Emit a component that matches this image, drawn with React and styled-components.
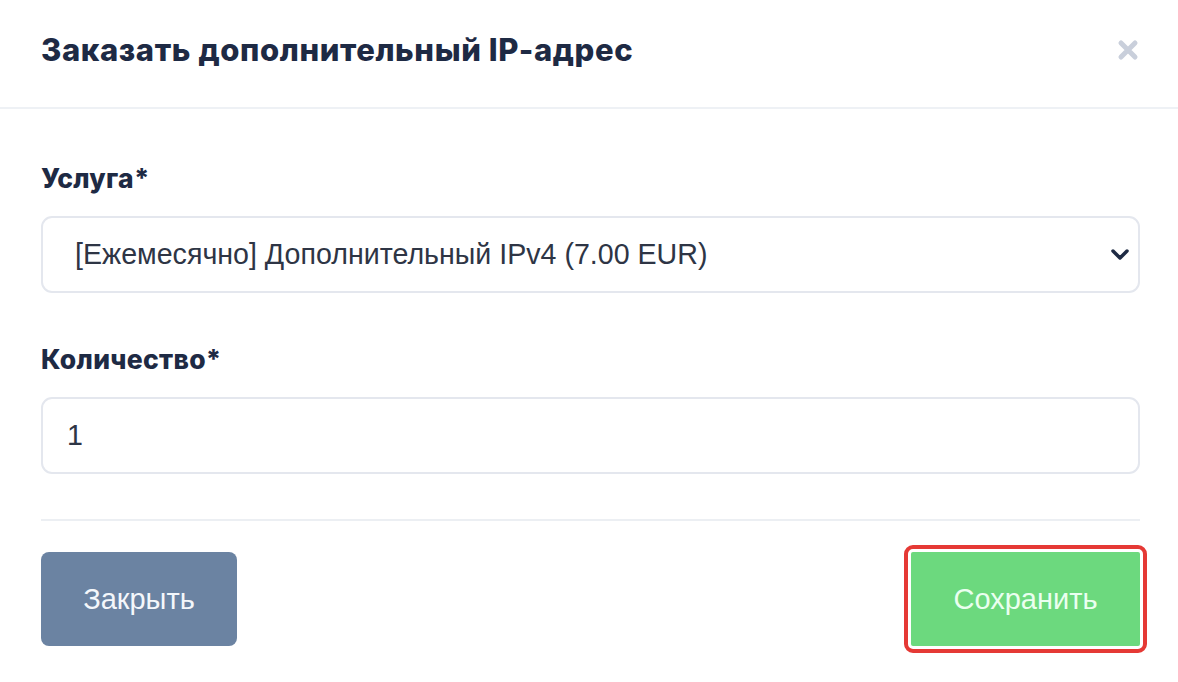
import React from "react";
import styled, { createGlobalStyle } from "styled-components";

const Global = createGlobalStyle`
  html, body { margin: 0; padding: 0; background: #ffffff; }
  body { font-family: "Liberation Sans", Arial, sans-serif; }
`;

const Modal = styled.div`
  width: 1178px;
  height: 682px;
  background: #fff;
  display: flex;
  flex-direction: column;
  box-sizing: border-box;
`;

const Header = styled.div`
  height: 109px;
  box-sizing: border-box;
  border-bottom: 2px solid #eef1f5;
  display: flex;
  align-items: center;
  justify-content: space-between;
  padding: 0 38px 8px 41px;
`;

const Title = styled.h2`
  margin: 0;
  font-family: Inter, "Noto Sans", sans-serif;
  font-weight: 800;
  font-size: 31px;
  letter-spacing: 0.6px;
  color: #1e2a44;
`;

const CloseBtn = styled.button`
  border: none;
  background: none;
  padding: 0;
  width: 24px;
  height: 24px;
  display: flex;
  align-items: center;
  justify-content: center;
  cursor: pointer;
`;

const Body = styled.div`
  padding: 59px 38px 0 41px;
  display: flex;
  flex-direction: column;
`;

const Field = styled.div`
  display: flex;
  flex-direction: column;
  margin-bottom: ${(p) => p.$mb || 0}px;
`;

const Label = styled.label`
  font-family: Inter, "Noto Sans", sans-serif;
  font-weight: 800;
  font-size: 26.5px;
  letter-spacing: 0.3px;
  color: #1e2a44;
  line-height: 20px;
  margin-bottom: 28px;
`;

const Control = styled.div`
  height: 77px;
  box-sizing: border-box;
  border: 2px solid #e4e7ee;
  border-radius: 11px;
  display: flex;
  align-items: center;
  justify-content: space-between;
  padding: 0 8px 0 ${(p) => p.$pl}px;
  font-family: "Liberation Sans", Arial, sans-serif;
  font-size: 28.6px;
  color: #2e3545;
`;

const Divider = styled.div`
  height: 2px;
  background: #eceff3;
  margin-top: 45px;
`;

const Footer = styled.div`
  display: flex;
  justify-content: space-between;
  align-items: center;
  margin-top: 31px;
`;

const Button = styled.button`
  height: 94px;
  width: ${(p) => p.$w}px;
  border: none;
  border-radius: 8px;
  background: ${(p) => p.$bg};
  color: ${(p) => p.$fg};
  font-family: "Liberation Sans", Arial, sans-serif;
  font-size: 29px;
  cursor: pointer;
  ${(p) =>
    p.$focused &&
    `outline: 4px solid #e53935; outline-offset: 3px; border-radius: 2px;`}
`;

export default function App() {
  return (
    <>
      <Global />
      <Modal>
        <Header>
          <Title>Заказать дополнительный IP-адрес</Title>
          <CloseBtn aria-label="close">
            <svg width="22" height="22" viewBox="0 0 22 22">
              <path
                d="M4 4 L18 18 M18 4 L4 18"
                stroke="#c9cfdb"
                strokeWidth="5"
                strokeLinecap="round"
              />
            </svg>
          </CloseBtn>
        </Header>
        <Body>
          <Field $mb={56}>
            <Label>Услуга*</Label>
            <Control $pl={32}>
              <span>[Ежемесячно] Дополнительный IPv4 (7.00 EUR)</span>
              <svg width="20" height="14" viewBox="0 0 20 14">
                <path
                  d="M3 3 L10 10 L17 3"
                  stroke="#1e2a44"
                  strokeWidth="3.5"
                  fill="none"
                  strokeLinecap="round"
                  strokeLinejoin="round"
                />
              </svg>
            </Control>
          </Field>
          <Field>
            <Label>Количество*</Label>
            <Control $pl={24}>
              <span>1</span>
            </Control>
          </Field>
          <Divider />
          <Footer>
            <Button $w={196} $bg="#6b83a2" $fg="#f4f7fb">
              Закрыть
            </Button>
            <Button $w={229} $bg="#6cd97e" $fg="#eafff0" $focused>
              Сохранить
            </Button>
          </Footer>
        </Body>
      </Modal>
    </>
  );
}
